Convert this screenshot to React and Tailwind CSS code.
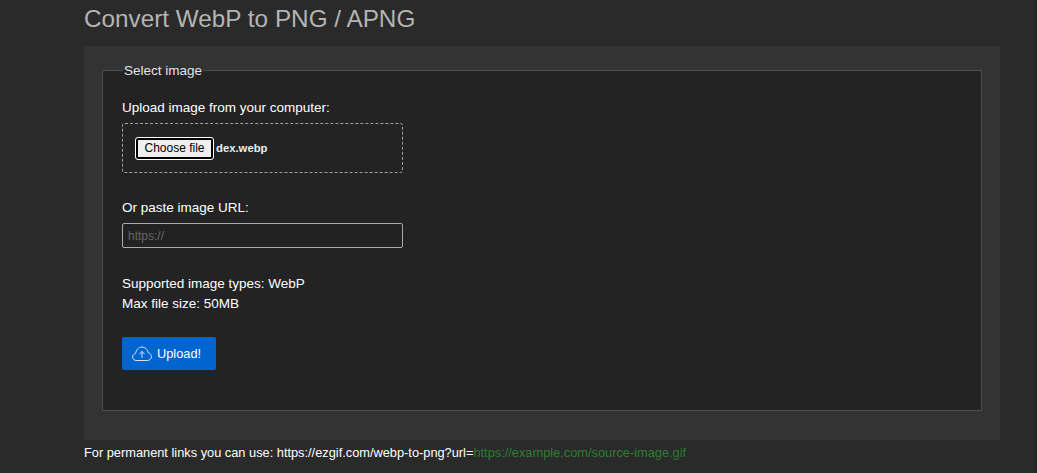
import React from 'react';

const CloudUpload = () => (
  <svg width="20" height="16" viewBox="0 0 20 16" fill="none" stroke="currentColor" strokeWidth="1" strokeLinecap="round" strokeLinejoin="round" className="text-[#d5e4f7]">
    <path d="M5 14.500H4.500C2.300 14.500.6 13 .6 11c0-1.800 1.300-3.300 3.100-3.700C4 4 6.700 1 10 1s5.800 2.700 6.200 5.800c1.800.3 3.200 2 3.200 3.900 0 2.100-1.700 3.800-3.900 3.800H5z" />
    <path d="M10 11.500V5.500M7.700 7.800 10 5.500l2.300 2.300" />
  </svg>
);

const App = () => {
  return (
    <div className="flex h-[473px] overflow-hidden bg-[#2a2a2a] text-white font-['Liberation_Sans',Arial,sans-serif] text-[13.5px]">
      <div className="ml-[84px] w-[916px]">
        <h1 className="h-[46px] pt-[5px] text-[24.3px] leading-[28px] text-[#b4b4b4]">Convert WebP to PNG / APNG</h1>

        <div className="h-[394px] bg-[#333333] px-[18px] pt-[16px]">
          <fieldset className="h-[349px] border border-[#4d4d4d] bg-[#232323] pl-[19px] pr-5">
            <legend className="ml-[1px] translate-y-[1px] px-[1px] text-[13.5px] leading-4 text-[#e4e4e4]">Select image</legend>

            <p className="mt-[20px] leading-5">Upload image from your computer:</p>
            <div className="mt-[5px] flex h-[50px] w-[281px] items-center rounded-[3px] border border-dashed border-[#a0a0a0] pl-[13px]">
              <button className="h-[21px] w-[77px] rounded-[2px] border-2 border-black bg-[#efefef] text-xs text-black outline outline-1 outline-white">Choose file</button>
              <span className="ml-[3px] text-[11.3px] font-bold text-[#e8f0f8]">dex.webp</span>
            </div>

            <p className="mt-[25px] leading-5">Or paste image URL:</p>
            <input
              type="text"
              placeholder="https://"
              className="mt-[5px] block h-[25px] w-[281px] rounded-[2px] border border-[#a9a9a9] bg-[#222222] px-[5px] text-xs text-white placeholder:text-[#666666] outline-none"
            />

            <p className="mt-[26px] leading-5">Supported image types: WebP</p>
            <p className="leading-5">Max file size: 50MB</p>

            <button className="mt-[23px] flex h-[33px] w-[94px] items-center gap-[5px] rounded-[2px] bg-[#0165d0] pl-[10px] text-[12.8px] text-white">
              <CloudUpload />
              Upload!
            </button>
          </fieldset>
        </div>

        <p className="mt-[5px] whitespace-nowrap text-[12.8px] leading-4 text-white">
          For permanent links you can use: https://ezgif.com/webp-to-png?url=<span className="text-[#2e7d2e]">https://example.com/source-image.gif</span>
        </p>
      </div>
      <div className="ml-auto w-[4px] bg-[#272727]"></div>
    </div>
  );
};

export default App;
